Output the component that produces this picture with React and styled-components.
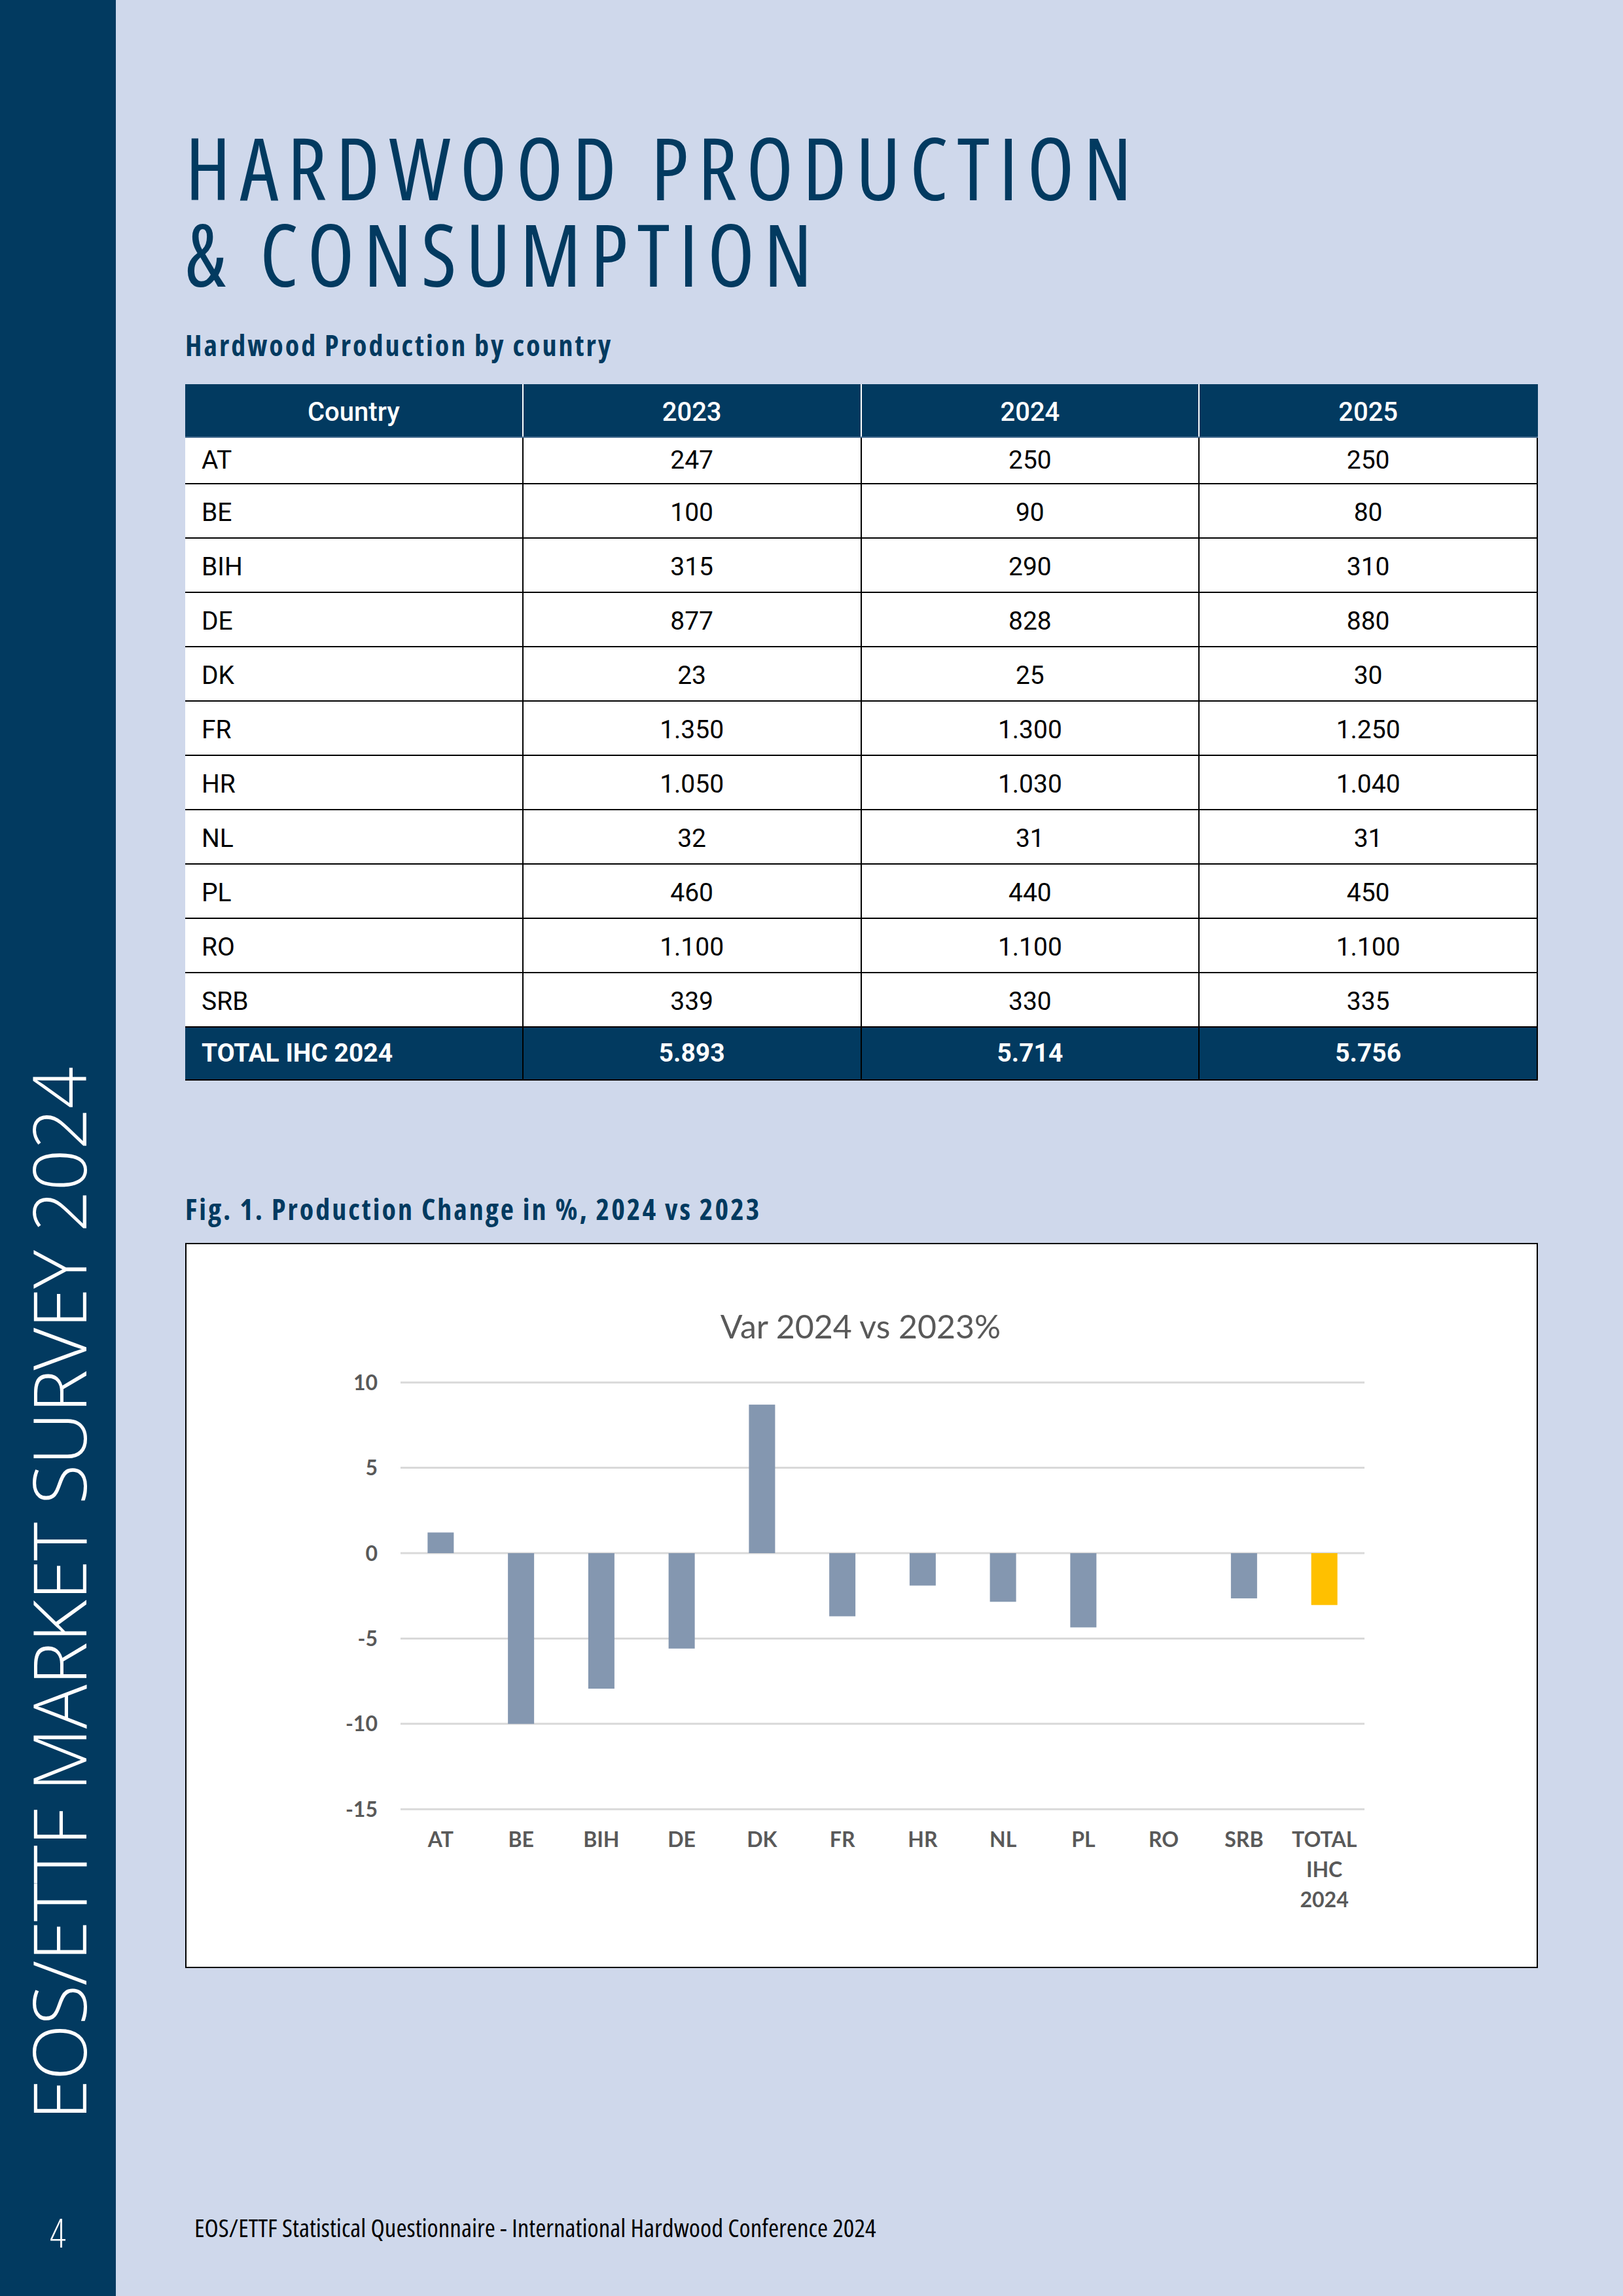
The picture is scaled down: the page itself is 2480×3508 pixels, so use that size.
import React from "react";
import styled, { createGlobalStyle } from "styled-components";

const NAVY = "#023a60";
const BG = "#cfd8eb";

const GlobalStyle = createGlobalStyle`
  * { box-sizing: border-box; }
  html, body { margin: 0; padding: 0; background: ${BG}; }
  body { font-family: "Open Sans", "DejaVu Sans", sans-serif; }
`;

const Page = styled.div`
  display: flex;
  width: 2480px;
  height: 3508px;
  background: ${BG};
  overflow: hidden;
`;

const Sidebar = styled.aside`
  width: 177px;
  flex: 0 0 177px;
  background: ${NAVY};
  display: flex;
  flex-direction: column;
  align-items: center;
  justify-content: flex-end;
  padding-bottom: 67px;
`;

const VerticalLabel = styled.div`
  writing-mode: vertical-rl;
  transform: rotate(180deg);
  font-family: "Open Sans", sans-serif;
  font-weight: 300;
  font-size: 112px;
  line-height: 1;
  letter-spacing: -1px;
  color: #fff;
  white-space: nowrap;
  margin-bottom: 142px;
`;

const PageNumber = styled.div`
  font-family: "Open Sans", sans-serif;
  font-stretch: condensed;
  font-weight: 300;
  font-size: 60px;
  line-height: 1;
  color: #fff;
`;

const Main = styled.main`
  flex: 1;
  display: flex;
  flex-direction: column;
  padding: 189px 130px 86px 106px;
`;

const Title = styled.h1`
  margin: 0;
  font-family: "Open Sans", sans-serif;
  font-stretch: condensed;
  font-weight: 400;
  font-size: 132px;
  line-height: 132px;
  letter-spacing: 14px;
  color: ${NAVY};
`;

const TitleLine = styled.span`
  display: block;
  height: 132px;
`;

const SectionHeading = styled.h2`
  margin: ${(p) => p.$mt}px 0 ${(p) => p.$mb}px;
  font-family: "Open Sans", sans-serif;
  font-stretch: condensed;
  font-weight: 700;
  font-size: 44px;
  line-height: 1.2;
  letter-spacing: 3px;
  color: ${NAVY};
`;

const Table = styled.div`
  width: 2067px;
  display: flex;
  flex-direction: column;
  font-family: Roboto, "Open Sans", sans-serif;
  font-size: 39px;
`;

const TableRow = styled.div`
  display: grid;
  grid-template-columns: repeat(4, 1fr);
  height: ${(p) => p.$h}px;
  background: ${(p) => (p.$dark ? NAVY : "#fff")};
  color: ${(p) => (p.$dark ? "#fff" : "#000")};
  font-weight: ${(p) => (p.$bold ? 700 : p.$head ? 500 : 400)};
  font-size: ${(p) => (p.$head ? 40 : 39)}px;
  border-bottom: ${(p) => (p.$head ? "2px solid #4a6f91" : "2px solid #000")};
`;

const Cell = styled.div`
  display: flex;
  align-items: center;
  justify-content: ${(p) => (p.$left ? "flex-start" : "center")};
  padding-left: ${(p) => (p.$left ? "25px" : "0")};
  padding-top: ${(p) => p.$nudge || 0}px;
  border-right: 2px solid ${(p) => (p.$head ? (p.$last ? NAVY : "#fff") : "#000")};
  white-space: nowrap;
`;

const ChartBox = styled.div`
  width: 2067px;
  height: 1108px;
  background: #fff;
  border: 2px solid #000;
  display: flex;
`;

const Footer = styled.div`
  margin-top: auto;
  padding-left: 14px;
  font-family: "Open Sans", sans-serif;
  font-stretch: condensed;
  font-weight: 400;
  font-size: 39px;
  line-height: 1;
  color: #000;
`;

const rows = [
  ["AT", "247", "250", "250"],
  ["BE", "100", "90", "80"],
  ["BIH", "315", "290", "310"],
  ["DE", "877", "828", "880"],
  ["DK", "23", "25", "30"],
  ["FR", "1.350", "1.300", "1.250"],
  ["HR", "1.050", "1.030", "1.040"],
  ["NL", "32", "31", "31"],
  ["PL", "460", "440", "450"],
  ["RO", "1.100", "1.100", "1.100"],
  ["SRB", "339", "330", "335"],
];

const bars = [
  ["AT", 1.21],
  ["BE", -10],
  ["BIH", -7.94],
  ["DE", -5.59],
  ["DK", 8.7],
  ["FR", -3.7],
  ["HR", -1.9],
  ["NL", -2.85],
  ["PL", -4.35],
  ["RO", 0],
  ["SRB", -2.65],
  ["TOTAL|IHC|2024", -3.04, true],
];

function Chart() {
  const W = 2063;
  const H = 1104;
  const x0 = 327;
  const x1 = 1800;
  const zeroY = 472;
  const unit = 26.08;
  const step = (x1 - x0) / bars.length;
  const y = (v) => zeroY - v * unit;
  const ticks = [10, 5, 0, -5, -10, -15];
  const labelFont = { fontFamily: "Lato, 'Open Sans', sans-serif", fontWeight: 700, fontSize: 32, fill: "#595959" };
  return (
    <svg width={W} height={H} viewBox={`0 0 ${W} ${H}`}>
      <text
        x={1030}
        y={144}
        textAnchor="middle"
        style={{ fontFamily: "Lato, 'Open Sans', sans-serif", fontWeight: 400, fontSize: 50, fill: "#595959" }}
      >
        Var 2024 vs 2023%
      </text>
      {ticks.map((t) => (
        <g key={t}>
          <line x1={x0} x2={x1} y1={y(t)} y2={y(t)} stroke="#d9d9d9" strokeWidth={3} />
          <text x={292} y={y(t) + 11.5} textAnchor="end" style={labelFont}>
            {t}
          </text>
        </g>
      ))}
      {bars.map(([name, v, total], i) => {
        const cx = x0 + step * (i + 0.5);
        const top = v >= 0 ? y(v) : zeroY;
        const h = Math.abs(v) * unit;
        return (
          <g key={name}>
            {h > 0 && (
              <rect x={cx - 20} y={top} width={40} height={h} fill={total ? "#ffc000" : "#8497b0"} />
            )}
            <text x={cx} y={921} textAnchor="middle" style={labelFont}>
              {name.split("|").map((part, k) => (
                <tspan key={k} x={cx} dy={k === 0 ? 0 : 46}>
                  {part}
                </tspan>
              ))}
            </text>
          </g>
        );
      })}
    </svg>
  );
}

export default function App() {
  return (
    <>
      <GlobalStyle />
      <Page>
        <Sidebar>
          <VerticalLabel>EOS/ETTF MARKET SURVEY 2024</VerticalLabel>
          <PageNumber>4</PageNumber>
        </Sidebar>
        <Main>
          <Title>
            <TitleLine>HARDWOOD PRODUCTION</TitleLine>
            <TitleLine>&amp; CONSUMPTION</TitleLine>
          </Title>
          <SectionHeading $mt={48} $mb={33}>Hardwood Production by country</SectionHeading>
          <Table>
            <TableRow $h={82} $dark $head>
              <Cell $head $nudge={6}>Country</Cell>
              <Cell $head $nudge={6}>2023</Cell>
              <Cell $head $nudge={6}>2024</Cell>
              <Cell $head $last $nudge={6}>2025</Cell>
            </TableRow>
            {rows.map((r, i) => {
              const n = i === 0 ? 0 : 5;
              return (
                <TableRow key={r[0]} $h={i === 0 ? 71 : 83}>
                  <Cell $left $nudge={n}>{r[0]}</Cell>
                  <Cell $nudge={n}>{r[1]}</Cell>
                  <Cell $nudge={n}>{r[2]}</Cell>
                  <Cell $nudge={n}>{r[3]}</Cell>
                </TableRow>
              );
            })}
            <TableRow $h={81} $dark $bold>
              <Cell $left>TOTAL IHC 2024</Cell>
              <Cell>5.893</Cell>
              <Cell>5.714</Cell>
              <Cell>5.756</Cell>
            </TableRow>
          </Table>
          <SectionHeading $mt={170} $mb={25}>Fig. 1. Production Change in %, 2024 vs 2023</SectionHeading>
          <ChartBox>
            <Chart />
          </ChartBox>
          <Footer>EOS/ETTF Statistical Questionnaire - International Hardwood Conference 2024</Footer>
        </Main>
      </Page>
    </>
  );
}
